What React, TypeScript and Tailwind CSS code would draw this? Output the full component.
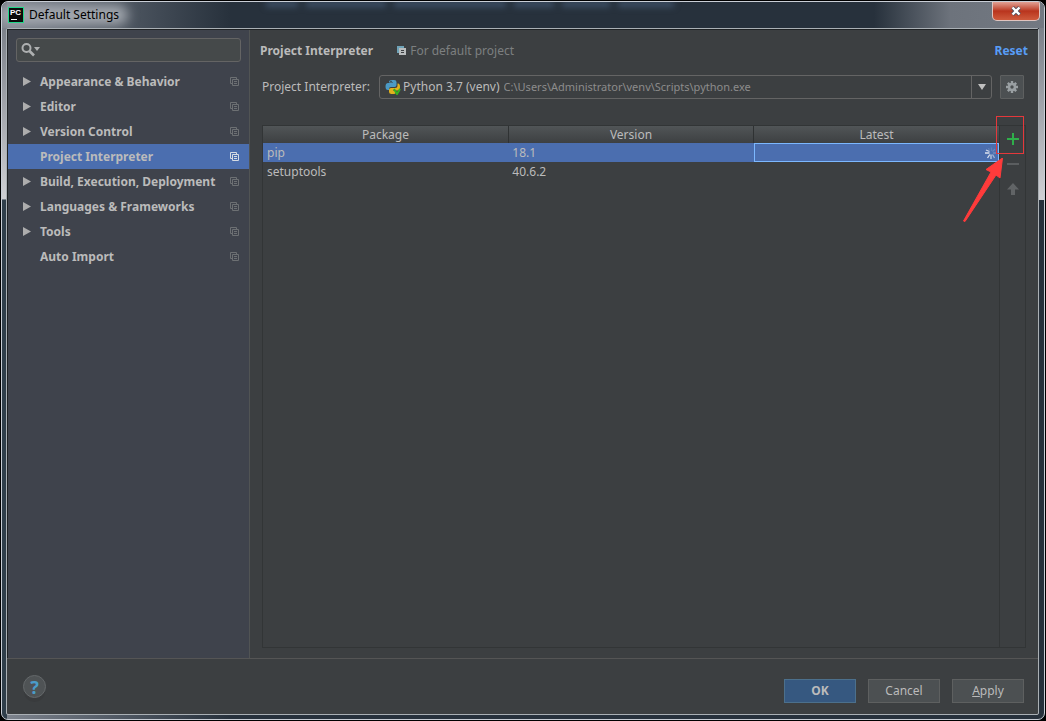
import { useState } from "react";
import type { ReactNode } from "react";

const categories = [
    { title: "Appearance & Behavior", expandable: true },
    { title: "Editor", expandable: true },
    { title: "Version Control", expandable: true },
    { title: "Project Interpreter", expandable: false },
    { title: "Build, Execution, Deployment", expandable: true },
    { title: "Languages & Frameworks", expandable: true },
    { title: "Tools", expandable: true },
    { title: "Auto Import", expandable: false },
];

const packages = [
    { name: "pip", version: "18.1", loading: true },
    { name: "setuptools", version: "40.6.2", loading: false },
];

function CopyIcon({ className }: { className?: string }) {
    return (
        <svg width="9" height="9" viewBox="0 0 9 9" fill="none" stroke="currentColor" className={className} aria-hidden="true">
            <path d="M2.5 6.5H0.5V0.5H6.5V2.5" />
            <path d="M2.5 2.5H8.5V8.5H2.5Z" />
            <path d="M4 4.5H7M4 6.5H7" />
        </svg>
    );
}

function ProjectIcon() {
    return (
        <svg width="9" height="9" viewBox="0 0 9 9" className="ml-6 mr-1" aria-hidden="true">
            <path d="M0 0H7V2H2V7H0Z" fill="#6fa3b8" />
            <rect x="2" y="2" width="7" height="7" fill="#b9bcbd" />
            <path d="M4 4.5H7M4 6.5H7" stroke="#3c3f41" />
        </svg>
    );
}

function PyCharmIcon() {
    return (
        <svg width="16" height="16" viewBox="0 0 16 16" aria-hidden="true">
            <rect width="16" height="16" fill="#21d789" />
            <rect x="1" y="1" width="14" height="14" fill="#0b0b0b" />
            <text x="2" y="8" fill="#fff" fontSize="8" fontWeight="700" fontFamily="Liberation Sans, sans-serif">PC</text>
            <rect x="3" y="12" width="6" height="1" fill="#fff" />
        </svg>
    );
}

function PythonIcon() {
    return (
        <svg width="16" height="16" viewBox="0 0 16 16" className="shrink-0" aria-hidden="true">
            <path d="M4 3Q4 1 7 1H9Q11.500 1 11.500 3V6Q11.500 8 9.500 8H6Q4 8 4 10V11H3Q0.500 11 0.500 7.500Q0.500 4 3 4H8V3.500H4Z" fill="#4b9ac4" />
            <circle cx="6" cy="2.400" r="0.700" fill="#2c3133" />
            <path d="M12.500 4.500H13Q15 4.500 15 8Q15 11.500 12.500 11.500H8V12H11V13Q11 15 8 15H6.500Q4 15 4 13V10.500Q4 9 6 9H10Q12.500 9 12.500 6.500Z" fill="#e0b11d" />
            <path d="M9 10L12 15L15 10" fill="none" stroke="#35b01f" strokeWidth="2" />
        </svg>
    );
}

function GearIcon() {
    return (
        <svg width="12" height="12" viewBox="0 0 12 12" aria-hidden="true">
            <g stroke="#9aa0a3" strokeWidth="2.400">
                <path d="M6 0V12M0 6H12M1.800 1.800L10.200 10.200M10.200 1.800L1.800 10.200" />
            </g>
            <circle cx="6" cy="6" r="4.200" fill="#9aa0a3" />
            <circle cx="6" cy="6" r="1.700" fill="#4c5052" />
        </svg>
    );
}

function Spinner() {
    return (
        <svg width="12" height="12" viewBox="0 0 12 12" fill="none" stroke="#dde3ee" strokeWidth="1.300" aria-label="Loading">
            <path d="M6 7.500V12" opacity="0.8" />
            <path d="M4.800 7.500L2.500 11" />
            <path d="M4.500 6H0" />
            <path d="M4.500 4.500L1 3" opacity="0.9" />
            <path d="M4.500 3.500L3.500 1" opacity="0.15" />
            <path d="M6.500 4V0.500" opacity="0.15" />
            <path d="M7.500 4.500L10 2" opacity="0.2" />
            <path d="M8 6H12" opacity="0.25" />
            <path d="M7.500 7.500L9.500 11" opacity="0.6" />
        </svg>
    );
}

function ToolButton({ label, children }: { label: string; children: ReactNode }) {
    return (
        <button aria-label={label} className="flex h-[25px] w-full items-center justify-center">
            {children}
        </button>
    );
}

function TitleBar() {
    return (
        <header className="relative flex h-[26px] shrink-0 items-center justify-between overflow-hidden pl-[6px]">
            {/* Blurred line of the editor showing through the glass */}
            <div className="absolute left-[264px] -top-px flex gap-2 blur-[3px]" aria-hidden="true">
                <span className="h-[6px] w-8 bg-[#3f5168]" />
                <span className="h-[6px] w-20 bg-[#3f5168]" />
                <span className="h-[6px] w-28 bg-[#3f5168]" />
                <span className="h-[6px] w-10 bg-[#3f5168]" />
                <span className="h-[6px] w-12 bg-[#3f5168]" />
                <span className="h-[6px] w-14 bg-[#3f5168]" />
            </div>
            <div className="absolute -left-1 top-[3px] h-5 w-[130px] rounded-full bg-[#a3a8af] blur-[6px]" aria-hidden="true" />
            <div className="relative flex items-center gap-[5px]">
                <PyCharmIcon />
                <h1 className="text-[12px] leading-4 text-black">Default Settings</h1>
            </div>
            <button
                aria-label="Close"
                className="relative mr-[4px] flex h-[19px] w-[48px] items-center justify-center self-start rounded-b-[5px] border border-t-0 border-[#e0c4bf] bg-linear-to-b from-[#e0a094] from-0% via-[#b9341d] via-50% to-[#cf5a3c]"
            >
                <svg width="12" height="10" viewBox="0 0 12 10" aria-hidden="true">
                    <path d="M2.500 1.500L9.500 8.500M9.500 1.500L2.500 8.500" stroke="#4c4f5e" strokeWidth="4" />
                    <path d="M2.500 1.500L9.500 8.500M9.500 1.500L2.500 8.500" stroke="#fff" strokeWidth="2.400" />
                </svg>
            </button>
        </header>
    );
}

function Sidebar() {
    const [selected, setSelected] = useState("Project Interpreter");

    return (
        <nav className="w-[242px] shrink-0 border-r border-[#515454] bg-[#3f434c] pt-2">
            <div className="relative mx-2 mb-[7px]">
                <input
                    type="text"
                    aria-label="Search settings"
                    className="block h-6 w-full rounded-[3px] border border-[#646464] bg-[#45494a] pl-7 text-[12px] text-[#bbbbbb] outline-none"
                />
                <svg width="20" height="14" viewBox="0 0 20 14" className="pointer-events-none absolute left-[5px] top-[5px]" aria-hidden="true">
                    <circle cx="5.500" cy="5" r="4" fill="none" stroke="#aeb0b1" strokeWidth="2" />
                    <path d="M8.500 8L13 12.500" stroke="#aeb0b1" strokeWidth="2.600" />
                    <path d="M13 4H19L16 8Z" fill="#aeb0b1" />
                </svg>
            </div>
            <ul>
                {categories.map((item) => {
                    const active = item.title === selected;
                    return (
                        <li key={item.title}>
                            <button
                                onClick={() => setSelected(item.title)}
                                className={`flex h-[25px] w-full items-center pl-[14px] pr-[10px] text-left ${active ? "bg-[#4b6eaf]" : ""}`}
                            >
                                <span className="w-[18px] shrink-0">
                                    {item.expandable && (
                                        <svg width="9" height="9" viewBox="0 0 9 9" aria-hidden="true">
                                            <path d="M1 0L9 4.500L1 9Z" fill="#adadad" />
                                        </svg>
                                    )}
                                </span>
                                <span className="flex-1 whitespace-nowrap text-[12px] font-bold text-[#bbbbbb]">{item.title}</span>
                                <CopyIcon className={active ? "text-[#d5dbe3]" : "text-[#6d7073]"} />
                            </button>
                        </li>
                    );
                })}
            </ul>
        </nav>
    );
}

function PackageTable() {
    return (
        <div className="min-w-0 flex-1">
            <table className="w-full table-fixed border-collapse text-left text-[#bbbbbb]">
                <thead>
                    <tr className="h-[17px] bg-linear-to-b from-[#515557] to-[#3d4042]">
                        {["Package", "Version", "Latest"].map((title) => (
                            <th key={title} className="border-r border-[#2f3233] p-0 text-center text-[12px] font-normal leading-4 last:border-r-0">
                                {title}
                            </th>
                        ))}
                    </tr>
                </thead>
                <tbody>
                    {packages.map((pkg) => (
                        <tr key={pkg.name} className={pkg.loading ? "h-[19px] bg-[#4b6eaf]" : "h-[19px]"}>
                            <td className="p-0 pl-1 leading-4">{pkg.name}</td>
                            <td className="p-0 pl-1 leading-4">{pkg.version}</td>
                            <td className="p-0">
                                {pkg.loading && (
                                    <div className="flex h-[19px] items-center justify-end border border-[#7cb8ff] pr-px">
                                        <Spinner />
                                    </div>
                                )}
                            </td>
                        </tr>
                    ))}
                </tbody>
            </table>
        </div>
    );
}

function PackageToolbar() {
    return (
        <div className="relative w-[26px] shrink-0 border-l border-[#323536]">
            <ToolButton label="Install package">
                <svg width="12" height="12" viewBox="0 0 12 12" aria-hidden="true">
                    <path d="M6 0V12M0 6H12" stroke="#2fae4a" strokeWidth="2" />
                </svg>
            </ToolButton>
            <ToolButton label="Uninstall package">
                <svg width="12" height="2" viewBox="0 0 12 2" aria-hidden="true">
                    <rect width="12" height="2" fill="#5b5e60" />
                </svg>
            </ToolButton>
            <ToolButton label="Upgrade package">
                <svg width="12" height="12" viewBox="0 0 12 12" aria-hidden="true">
                    <path d="M6 0L12 6.500H8V12H4V6.500H0Z" fill="#616466" />
                </svg>
            </ToolButton>

            {/* Callout: box round the add button and an arrow to it */}
            <div className="pointer-events-none absolute -left-1 -top-[10px] h-[38px] w-7 border border-[#e5383b]" />
            <svg width="40" height="64" viewBox="0 0 40 64" className="pointer-events-none absolute -left-[37px] top-[32px]" aria-hidden="true">
                <path d="M0.500 63L28 14L23 11.500L39.500 0L37 20L33 17L2 63.500Z" fill="#ff3b3b" stroke="#ff3b3b" strokeLinejoin="round" />
            </svg>
        </div>
    );
}

export default function App() {
    return (
        <div className="h-screen min-h-[480px] bg-black p-px font-['Noto_Sans','Open_Sans',sans-serif] text-[12px]">
            <div className="relative flex h-full flex-col overflow-hidden rounded-[7px] border border-[#c9ced6] bg-[#2c3a46] bg-linear-to-r from-[#7f858f] via-[#27313c] via-22% to-[#27313c]">
                {/* Glass tint down both edges and behind the close button */}
                <div className="absolute inset-y-0 left-0 w-[5px] bg-linear-to-b from-[#70767f] via-[#cfd0d4] via-[197px] to-[#2f3e4a] to-[198px]" />
                <div className="absolute right-0 top-0 h-[198px] w-[5px] bg-linear-to-b from-[#70767f] to-[#cfd0d4]" />
                <div className="absolute right-0 top-0 h-[26px] w-[170px] bg-linear-to-l from-[#737982] via-[#6d737c] via-55% to-transparent" />
                <TitleBar />
                <div className="relative mb-1 ml-1 mr-[5px] flex min-h-0 flex-1 flex-col rounded-[2px] border border-[#aab0b5] bg-[#3c3f41]">
                    <div className="flex min-h-0 flex-1 border-l border-t border-[#1f2224]">
                        <Sidebar />
                        <main className="flex min-w-0 flex-1 flex-col px-[10px] pb-[10px]">
                            <div className="flex h-[45px] items-center pb-1">
                                <h2 className="text-[12px] font-bold text-[#bbbbbb]">Project Interpreter</h2>
                                <ProjectIcon />
                                <span className="flex-1 text-[#7d7f80]">For default project</span>
                                <a href="#reset" className="font-bold text-[#589df6]">Reset</a>
                            </div>
                            <div className="flex h-6 items-center pl-[2px] pr-1">
                                <label htmlFor="interpreter" className="w-[117px] shrink-0 text-[#bbbbbb]">Project Interpreter:</label>
                                <div className="flex h-6 min-w-0 flex-1 items-center rounded-[3px] border border-[#646464] pl-[5px]">
                                    <PythonIcon />
                                    <select
                                        id="interpreter"
                                        className="ml-[2px] shrink-0 appearance-none bg-transparent p-0 text-[12px] text-[#bbbbbb] outline-none field-sizing-content"
                                    >
                                        <option>Python 3.7 (venv)</option>
                                    </select>
                                    <span className="ml-1 flex-1 truncate text-[11px] text-[#8c8c8c]">
                                        C:\Users\Administrator\venv\Scripts\python.exe
                                    </span>
                                    <span className="flex h-full w-5 items-center justify-center border-l border-[#646464]">
                                        <svg width="8" height="6" viewBox="0 0 8 6" aria-hidden="true">
                                            <path d="M0 0H8L4 6Z" fill="#c0c0c0" />
                                        </svg>
                                    </span>
                                </div>
                                <button aria-label="Interpreter settings" className="ml-2 flex size-6 items-center justify-center rounded-[1px] border border-[#5e6060] bg-[#4c5052]">
                                    <GearIcon />
                                </button>
                            </div>
                            <div className="mx-[2px] mt-[26px] flex min-h-0 flex-1 border border-[#323536]">
                                <PackageTable />
                                <PackageToolbar />
                            </div>
                        </main>
                    </div>
                    <footer className="flex h-[56px] shrink-0 items-center gap-3 border-t border-[#555555] pl-4 pr-[14px] pt-2">
                        <button aria-label="Help" className="mb-2 mr-auto flex size-[23px] items-center justify-center rounded-full border border-[#64686a] bg-[#4f5355] text-[18px] font-bold leading-none text-[#4a9cc9] shadow-[0_5px_0_-1px_#393b3d]">
                            ?
                        </button>
                        <button className="h-6 w-18 border border-[#4c708c] bg-[#365880] font-bold text-[#bbbbbb]">OK</button>
                        <button className="h-6 w-18 border border-[#5e6060] bg-[#4c5052] text-[#bbbbbb]">Cancel</button>
                        <button className="h-6 w-18 border border-[#5e6060] bg-[#4c5052] text-[#bbbbbb]">
                            <span className="underline">A</span>pply
                        </button>
                    </footer>
                </div>
            </div>
        </div>
    );
}
